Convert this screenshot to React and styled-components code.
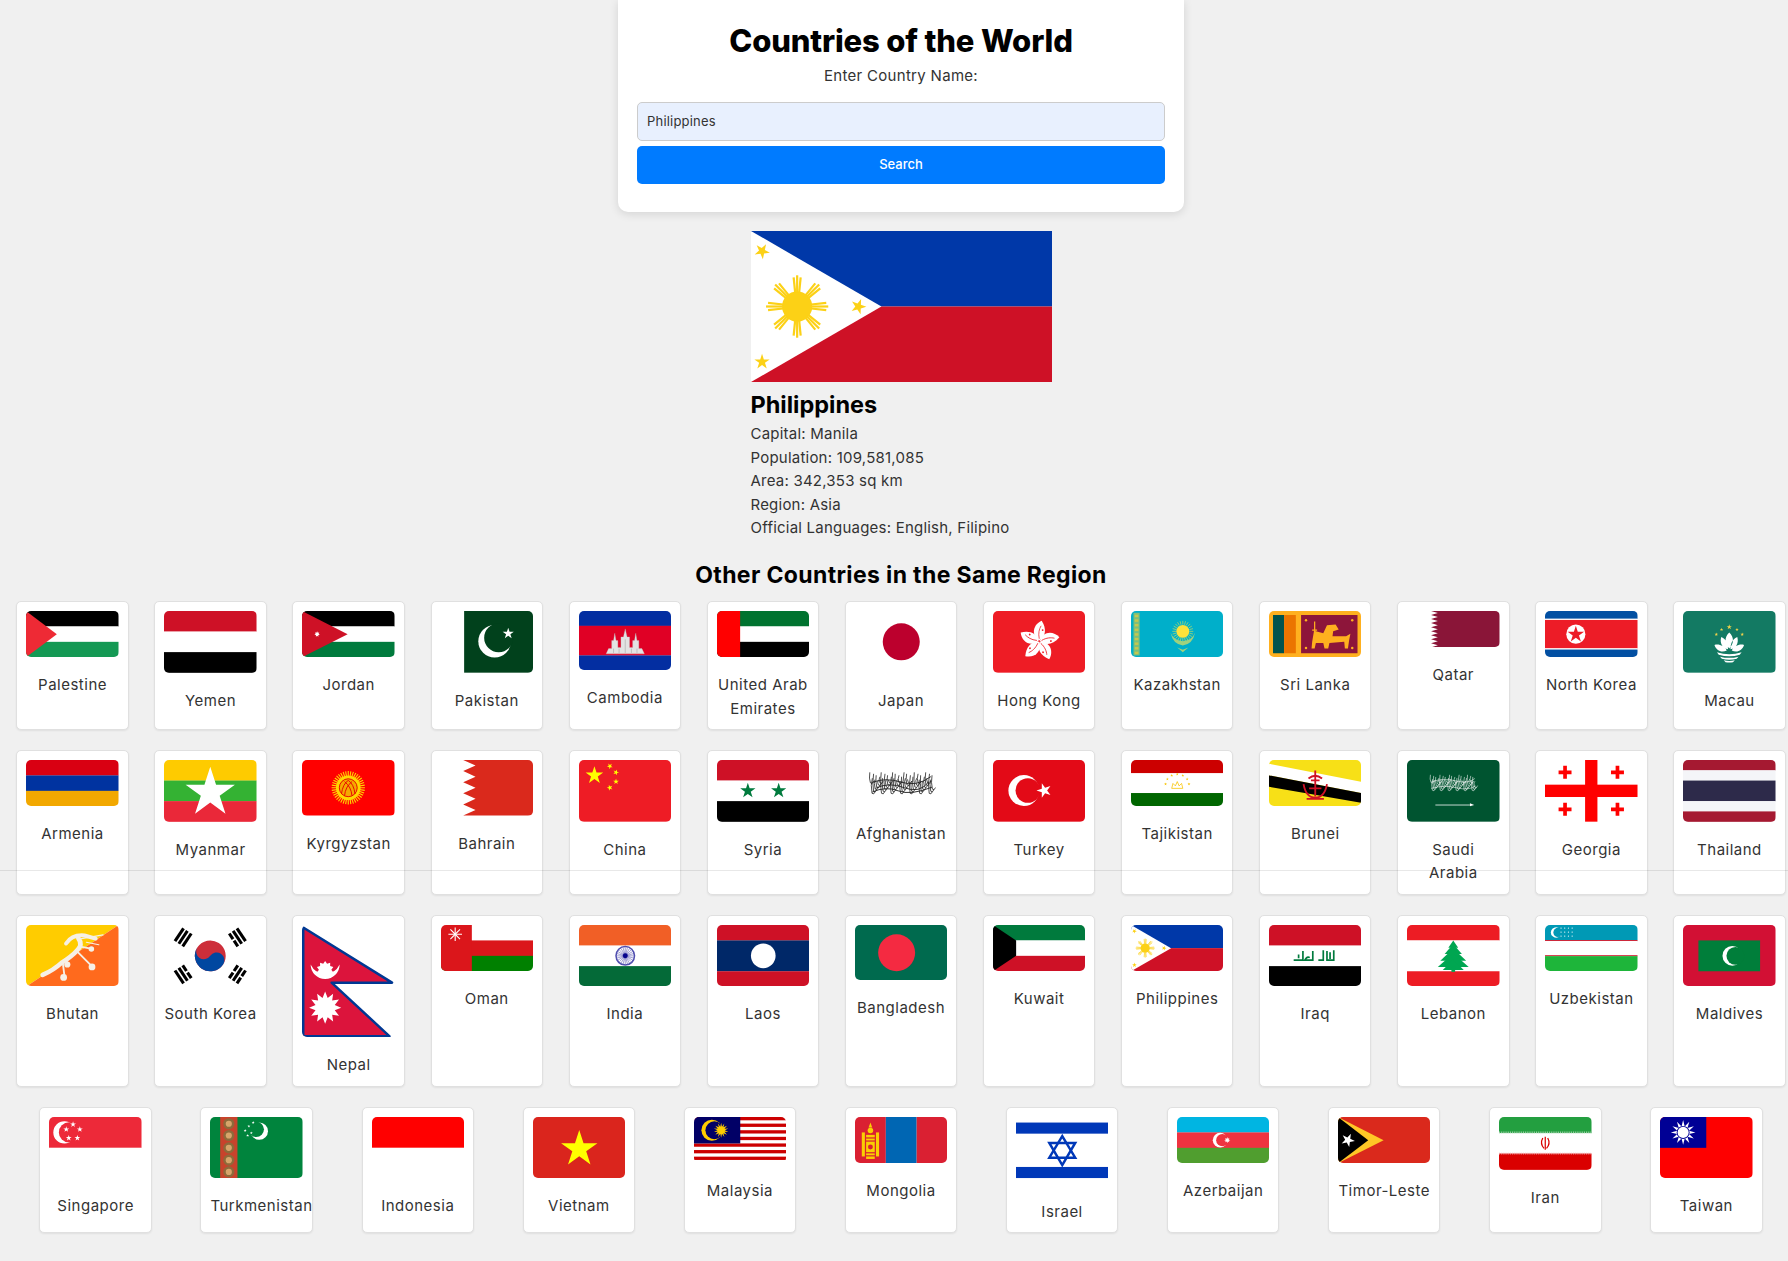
import React from "react";
import styled, { createGlobalStyle } from "styled-components";

const GlobalStyle = createGlobalStyle`
  html, body {
    margin: 0;
    background: #f0f0f0;
  }
  body {
    font-family: Inter, "Liberation Sans", sans-serif;
    color: #333;
  }
`;

const Page = styled.div`
  position: relative;
  box-sizing: border-box;
  width: 1788px;
  height: 1261px;
  overflow: hidden;
  padding-left: 14px;
  background: #f0f0f0;
`;

const Seam = styled.div`
  position: absolute;
  left: 0;
  right: 0;
  top: 870px;
  height: 1px;
  background: rgba(0, 0, 0, 0.09);
`;

const Main = styled.main`
  width: 1774px;
  display: flex;
  flex-direction: column;
  align-items: center;
`;

const SearchCard = styled.section`
  box-sizing: border-box;
  width: 566px;
  height: 212px;
  padding: 23px 19px 0;
  background: #fff;
  border-radius: 0 0 10px 10px;
  box-shadow: 0 2px 10px rgba(0, 0, 0, 0.12);
  text-align: center;
`;

const Title = styled.h1`
  margin: 0;
  font-size: 31px;
  line-height: 36px;
  font-weight: 800;
  color: #000;
  letter-spacing: -0.15px;
`;

const FieldLabel = styled.label`
  display: block;
  margin: 5px 0 15px;
  font-size: 15px;
  line-height: 23px;
  letter-spacing: 0.3px;
`;

const SearchInput = styled.input`
  display: block;
  box-sizing: border-box;
  width: 100%;
  height: 39px;
  padding: 0 9px 2px;
  border: 1px solid #ccc;
  border-radius: 5px;
  background: #e8f0fe;
  font: 400 13px Inter, "Liberation Sans", sans-serif;
  letter-spacing: 0.2px;
  color: #333;
  outline: none;
`;

const SearchButton = styled.button`
  display: block;
  width: 100%;
  height: 38px;
  padding: 0 0 2px;
  margin-top: 5px;
  border: 0;
  border-radius: 5px;
  background: #007bff;
  color: #fff;
  font: 500 13px Inter, "Liberation Sans", sans-serif;
`;

const Result = styled.section`
  width: 301px;
  margin-top: 19px;
`;

const ResultFlag = styled.svg`
  display: block;
  width: 301px;
  height: 151px;
`;

const ResultName = styled.h2`
  margin: 8px 0 2px;
  font-size: 23.5px;
  line-height: 30px;
  font-weight: 700;
  color: #000;
`;

const Fact = styled.div`
  font-size: 15px;
  line-height: 23.6px;
  letter-spacing: 0.22px;
`;

const SectionTitle = styled.h2`
  margin: 20px 0 11px;
  font-size: 23px;
  line-height: 30px;
  font-weight: 700;
  color: #000;
  letter-spacing: 0.36px;
`;

const Grid = styled.div`
  display: flex;
  flex-direction: column;
  gap: 20px;
  width: 100%;
`;

const Row = styled.div`
  display: flex;
  justify-content: center;
  gap: ${(p) => p.$gap}px;
`;

const Card = styled.article`
  box-sizing: border-box;
  flex: 0 0 112.4px;
  width: 112.4px;
  padding: 9px 8.95px;
  background: #fff;
  border: 1px solid #e0e0e0;
  border-radius: 5px;
  box-shadow: 0 1px 2px rgba(0, 0, 0, 0.07);
  text-align: center;
`;

const CardFlag = styled.svg`
  display: block;
  width: 100%;
  border-radius: 5px;
`;

const CardName = styled.div`
  margin-top: 16px;
  font-size: 15px;
  line-height: 23.4px;
  letter-spacing: 0.5px;
  white-space: ${(p) => (p.$nowrap ? "nowrap" : "normal")};
  text-align: ${(p) => (p.$nowrap ? "left" : "center")};
`;

// flag drawing helpers
const star = (cx, cy, r, n = 5, k = 0.382, rot = -90) => {
  const pts = [];
  for (let i = 0; i < n * 2; i++) {
    const a = ((rot + (i * 180) / n) * Math.PI) / 180;
    const rr = i % 2 ? r * k : r;
    pts.push(`${(cx + rr * Math.cos(a)).toFixed(2)},${(cy + rr * Math.sin(a)).toFixed(2)}`);
  }
  return pts.join(" ");
};

const Star = ({ x, y, r, fill, n, k, rot }) => <polygon points={star(x, y, r, n, k, rot)} fill={fill} />;

const Bands = ({ h, colors, weights }) => {
  const w = weights || colors.map(() => 1);
  const total = w.reduce((a, b) => a + b, 0);
  let y = 0;
  return colors.map((c, i) => {
    const bh = (h * w[i]) / total;
    const el = <rect key={i} x="0" y={y} width="300" height={bh + 0.5} fill={c} />;
    y += bh;
    return el;
  });
};

const Rays = ({ x, y, r1, r2, n, color, width }) =>
  Array.from({ length: n }).map((_, i) => {
    const a = (i * 2 * Math.PI) / n;
    return (
      <line
        key={i}
        x1={x + r1 * Math.cos(a)}
        y1={y + r1 * Math.sin(a)}
        x2={x + r2 * Math.cos(a)}
        y2={y + r2 * Math.sin(a)}
        stroke={color}
        strokeWidth={width}
      />
    );
  });

const Crescent = ({ x, y, r, dx, dy = 0, ir, color, bg }) => (
  <>
    <circle cx={x} cy={y} r={r} fill={color} />
    <circle cx={x + dx} cy={y + dy} r={ir} fill={bg} />
  </>
);

const PhilippinesArt = () => (
  <>
    <rect width="300" height="75" fill="#0038a8" />
    <rect y="75" width="300" height="75" fill="#ce1126" />
    <polygon points="0,0 130,75 0,150" fill="#fff" />
    <circle cx="46" cy="75" r="15" fill="#fcd116" />
    {[0, 45, 90, 135, 180, 225, 270, 315].map((a) => (
      <g key={a} transform={`rotate(${a} 46 75)`} stroke="#fcd116" strokeWidth="2.2">
        <line x1="60" y1="75" x2="77" y2="75" />
        <line x1="60" y1="73" x2="75" y2="71.5" />
        <line x1="60" y1="77" x2="75" y2="78.5" />
      </g>
    ))}
    <Star x={11} y={20} r={8} fill="#fcd116" rot={-60} />
    <Star x={107} y={75} r={8} fill="#fcd116" rot={-70} />
    <Star x={11} y={130} r={8} fill="#fcd116" />
  </>
);

// dense strokes standing in for the calligraphy on a few flags
const Scribble = ({ x, y, w, h, color, n = 20, sw = 2 }) => {
  const strokes = [];
  for (let i = 0; i < n; i++) {
    const px = x + (i * w) / n;
    const up = ((i * 11) % 7) * h * 0.07;
    const down = h * (0.5 + ((i * 5) % 6) * 0.1);
    strokes.push(
      <path
        key={i}
        d={`M${px + ((i * 3) % 4)} ${y + up} Q${px - 3} ${y + down * 0.6} ${px + 2} ${y + down} q6 6 ${w / n + 5} -5`}
        fill="none"
        stroke={color}
        strokeWidth={sw}
      />
    );
  }
  return strokes;
};

const FLAGS = {
  Palestine: [150, <>
    <Bands h={150} colors={["#000", "#fff", "#149954"]} />
    <polygon points="0,0 100,75 0,150" fill="#ee2a35" />
  </>],
  Yemen: [200, <Bands h={200} colors={["#ce1126", "#fff", "#000"]} />],
  Jordan: [150, <>
    <Bands h={150} colors={["#000", "#fff", "#007a3d"]} />
    <polygon points="0,0 148,75 0,150" fill="#ce1126" />
    <Star x={49} y={75} r={9} n={7} k={0.55} fill="#fff" />
  </>],
  Pakistan: [200, <>
    <rect width="300" height="200" fill="#fff" />
    <rect x="75" width="225" height="200" fill="#01411c" />
    <Crescent x={174} y={98} r={53} dx={13} dy={-11} ir={47} color="#fff" bg="#01411c" />
    <Star x={218} y={73} r={19} fill="#fff" />
  </>],
  Cambodia: [192, <>
    <Bands h={192} colors={["#032ea1", "#e00025", "#032ea1"]} weights={[1, 2, 1]} />
    <g fill="#e3e3e3" stroke="#bbb" strokeWidth="1">
      <polygon points="88,139 96,122 106,122 106,96 112,96 116,72 120,96 126,96 126,118 136,118 136,84 144,84 150,58 156,84 164,84 164,118 174,118 174,96 180,96 184,72 188,96 194,96 194,122 204,122 212,139" />
    </g>
    <g stroke="#a9a9a9" strokeWidth="2">
      <line x1="112" y1="122" x2="112" y2="136" />
      <line x1="130" y1="122" x2="130" y2="136" />
      <line x1="150" y1="92" x2="150" y2="136" />
      <line x1="170" y1="122" x2="170" y2="136" />
      <line x1="188" y1="122" x2="188" y2="136" />
    </g>
  </>],
  "United Arab Emirates": [150, <>
    <Bands h={150} colors={["#00732f", "#fff", "#000"]} />
    <rect width="75" height="150" fill="#ff0000" />
  </>],
  Japan: [200, <>
    <rect width="300" height="200" fill="#fff" />
    <circle cx="150" cy="100" r="60" fill="#bc002d" />
  </>],
  "Hong Kong": [200, <>
    <rect width="300" height="200" fill="#ee1c25" />
    {[0, 72, 144, 216, 288].map((a) => (
      <g key={a} transform={`rotate(${a} 150 98)`}>
        <path d="M150 96 C122 78 130 44 158 32 C174 58 172 82 150 96 Z" fill="#fff" />
        <path d="M150 90 C146 72 150 58 156 48" fill="none" stroke="#ee1c25" strokeWidth="2.5" />
        <circle cx="161" cy="62" r="3" fill="#ee1c25" />
      </g>
    ))}
  </>],
  Kazakhstan: [150, <>
    <rect width="300" height="150" fill="#00afca" />
    <rect x="8" y="6" width="20" height="138" fill="#7fbf7a" />
    {Array.from({ length: 9 }).map((_, i) => (
      <rect key={i} x="12" y={12 + i * 15} width="12" height="8" fill="#c6c84e" />
    ))}
    <Rays x={168} y={66} r1={22} r2={34} n={24} color="#d8e35a" width={2} />
    <circle cx="168" cy="66" r="21" fill="#fee23a" />
    <path d="M128 70 Q136 108 168 112 Q200 108 208 70 Q198 96 168 98 Q138 96 128 70Z" fill="#9fd27e" />
    <path d="M150 118 L168 126 L186 118 L168 134Z" fill="#9fd27e" />
  </>],
  "Sri Lanka": [150, <>
    <rect width="300" height="150" fill="#ffb01f" />
    <rect x="13" y="13" width="36" height="124" fill="#00534e" />
    <rect x="49" y="13" width="38" height="124" fill="#eb7400" />
    <rect x="104" y="13" width="183" height="124" fill="#8d153a" />
    <g fill="#ffb01f">
      <path d="M140 100 L146 64 L176 72 L188 46 L216 44 L226 60 L208 66 L206 82 L250 82 L264 74 L260 94 L256 122 L246 122 L244 100 L196 104 L192 122 L180 122 L176 104 L152 104 L148 122 L138 122Z" />
      <rect x="146" y="34" width="4" height="70" />
      <rect x="140" y="60" width="16" height="4" />
      <circle cx="120" cy="30" r="4" />
      <circle cx="270" cy="30" r="4" />
      <circle cx="120" cy="120" r="4" />
      <circle cx="270" cy="120" r="4" />
    </g>
  </>],
  Qatar: [118, <>
    <rect width="300" height="118" fill="#fff" />
    <polygon
      points={`300,0 78,0 ${Array.from({ length: 9 })
        .map((_, i) => `100,${(i + 0.5) * 13.1} 78,${(i + 1) * 13.1}`)
        .join(" ")} 300,118`}
      fill="#8a1538"
    />
  </>],
  "North Korea": [150, <>
    <Bands h={150} colors={["#024fa2", "#fff", "#ed1c27", "#fff", "#024fa2"]} weights={[25, 4, 92, 4, 25]} />
    <circle cx="100" cy="75" r="31" fill="#fff" />
    <Star x={100} y={76} r={28} fill="#ed1c27" />
  </>],
  Macau: [200, <>
    <rect width="300" height="200" fill="#137a63" />
    <Star x={150} y={52} r={9} fill="#f2d24a" />
    <Star x={125} y={60} r={6} fill="#f2d24a" />
    <Star x={175} y={60} r={6} fill="#f2d24a" />
    <Star x={108} y={76} r={6} fill="#f2d24a" />
    <Star x={192} y={76} r={6} fill="#f2d24a" />
    <path d="M150 70 C166 84 166 106 150 122 C134 106 134 84 150 70Z M124 84 C142 92 146 108 146 124 C128 120 118 104 124 84Z M176 84 C158 92 154 108 154 124 C172 120 182 104 176 84Z M102 110 C118 106 134 114 142 128 C124 136 108 128 102 110Z M198 110 C182 106 166 114 158 128 C176 136 192 128 198 110Z" fill="#fff" />
    <path d="M110 134 Q150 146 190 134 L184 142 Q150 152 116 142Z M120 148 Q150 156 180 148 L174 155 Q150 161 126 155Z M132 160 Q150 164 168 160 L162 166 Q150 168 138 166Z" fill="#fff" />
  </>],
  Armenia: [150, <Bands h={150} colors={["#d90012", "#0033a0", "#f2a800"]} />],
  Myanmar: [200, <>
    <Bands h={200} colors={["#fecb00", "#34b233", "#ea2839"]} />
    <Star x={150} y={106} r={84} fill="#fff" />
  </>],
  Kyrgyzstan: [180, <>
    <rect width="300" height="180" fill="#ff0000" />
    <Rays x={150} y={90} r1={30} r2={54} n={40} color="#ffd700" width={3.5} />
    <circle cx="150" cy="90" r="40" fill="#ffd700" />
    <circle cx="150" cy="90" r="30" fill="#f5a800" />
    <g fill="none" stroke="#e60000" strokeWidth="3">
      <circle cx="150" cy="90" r="29" />
      <path d="M128 110 Q132 78 150 66 Q168 78 172 110" />
      <path d="M138 116 Q140 88 162 70" />
      <path d="M162 116 Q160 88 138 70" />
    </g>
  </>],
  Bahrain: [180, <>
    <rect width="300" height="180" fill="#fff" />
    <polygon
      points={`300,0 72,0 ${Array.from({ length: 5 })
        .map((_, i) => `112,${(i + 0.5) * 36} 72,${(i + 1) * 36}`)
        .join(" ")} 300,180`}
      fill="#da291c"
    />
  </>],
  China: [200, <>
    <rect width="300" height="200" fill="#ee1c25" />
    <Star x={50} y={50} r={30} fill="#ffff00" />
    <Star x={100} y={20} r={10} fill="#ffff00" rot={-50} />
    <Star x={120} y={40} r={10} fill="#ffff00" rot={-70} />
    <Star x={120} y={70} r={10} fill="#ffff00" />
    <Star x={100} y={90} r={10} fill="#ffff00" rot={-110} />
  </>],
  Syria: [200, <>
    <Bands h={200} colors={["#ce1126", "#fff", "#000"]} />
    <Star x={100} y={100} r={26} fill="#007a3d" />
    <Star x={200} y={100} r={26} fill="#007a3d" />
  </>],
  Afghanistan: [150, <>
    <rect width="300" height="150" fill="#fff" />
    <Scribble x={48} y={40} w={206} h={68} color="#111" n={40} sw={2.4} />
    <path d="M56 104 Q100 84 140 100 T250 88 M66 92 Q110 70 160 90 T240 70 M58 72 Q100 56 150 72 T246 54" fill="none" stroke="#222" strokeWidth="3" />
  </>],
  Turkey: [200, <>
    <rect width="300" height="200" fill="#e30a17" />
    <Crescent x={100} y={99} r={50} dx={13} ir={40} color="#fff" bg="#e30a17" />
    <Star x={166} y={99} r={25} fill="#fff" rot={-180} />
  </>],
  Tajikistan: [150, <>
    <Bands h={150} colors={["#cc0000", "#fff", "#006600"]} weights={[2, 3, 2]} />
    <g fill="none" stroke="#f8c300" strokeWidth="2.5">
      <path d="M132 92 L136 76 L144 84 L150 70 L156 84 L164 76 L168 92Z" />
    </g>
    {[[112, 78], [118, 62], [132, 50], [150, 46], [168, 50], [182, 62], [188, 78]].map(([x, y]) => (
      <Star key={x} x={x} y={y} r={5} fill="#f8c300" />
    ))}
  </>],
  Brunei: [150, <>
    <rect width="300" height="150" fill="#f7e017" />
    <polygon points="0,12 0,50 300,107 300,71" fill="#fff" />
    <polygon points="0,50 0,87 300,139 300,107" fill="#000" />
    <g fill="none" stroke="#cf1126" strokeWidth="6">
      <path d="M112 78 Q120 122 150 122 Q180 122 188 78" />
      <path d="M150 34 L150 118" />
      <path d="M128 60 Q150 42 172 60" />
      <path d="M130 92 L170 92" />
      <path d="M122 126 L178 126" />
      <path d="M136 66 L164 66" />
    </g>
  </>],
  "Saudi Arabia": [200, <>
    <rect width="300" height="200" fill="#005430" />
    <Scribble x={76} y={48} w={146} h={50} color="#fff" n={34} sw={1.8} />
    <path d="M78 92 Q120 80 160 90 T222 84 M80 70 Q120 58 160 68 T220 60" fill="none" stroke="#fff" strokeWidth="1.8" />
    <path d="M92 146 L204 146" stroke="#fff" strokeWidth="2.5" />
    <path d="M204 140 L218 146 L204 150Z" fill="#fff" />
  </>],
  Georgia: [200, <>
    <rect width="300" height="200" fill="#fff" />
    <rect x="130" width="40" height="200" fill="#ff0000" />
    <rect y="80" width="300" height="40" fill="#ff0000" />
    {[[65, 40], [235, 40], [65, 160], [235, 160]].map(([x, y]) => (
      <path key={x * y} d={`M${x - 6} ${y - 21} h12 v15 h15 v12 h-15 v15 h-12 v-15 h-15 v-12 h15Z`} fill="#ff0000" />
    ))}
  </>],
  Thailand: [200, <Bands h={200} colors={["#a51931", "#f4f5f8", "#2d2a4a", "#f4f5f8", "#a51931"]} weights={[1, 1, 2, 1, 1]} />],
  Bhutan: [200, <>
    <polygon points="0,200 300,0 0,0" fill="#ffcc00" />
    <polygon points="0,200 300,0 300,200" fill="#ff6a1d" />
    <g fill="none" stroke="#f6f0e6" strokeLinecap="round">
      <path d="M54 162 Q90 146 116 122 Q150 100 164 84 Q186 64 170 44" strokeWidth="15" />
      <path d="M130 60 Q150 30 190 34 L226 44" strokeWidth="13" />
      <path d="M180 44 L250 32 M196 56 L236 64" strokeWidth="4" />
      <path d="M120 128 L124 160 M132 114 L134 128 M168 88 L210 130 M176 70 L206 76" strokeWidth="6" />
    </g>
    <circle cx="122" cy="170" r="11" fill="#f6f0e6" />
    <circle cx="134" cy="128" r="10" fill="#f6f0e6" />
    <circle cx="214" cy="136" r="11" fill="#f6f0e6" />
    <circle cx="212" cy="78" r="9" fill="#f6f0e6" />
  </>],
  "South Korea": [200, <>
    <rect width="300" height="200" fill="#fff" />
    <g transform="rotate(33.7 150 100)">
      <circle cx="150" cy="100" r="50" fill="#cd2e3a" />
      <path d="M100 100 A50 50 0 0 0 200 100 A25 25 0 0 0 150 100 A25 25 0 0 1 100 100Z" fill="#0047a0" />
    </g>
    {[[62, 40, -56.3, [1, 1, 1]], [238, 40, 56.3, [1, 1, 0]], [62, 160, 56.3, [0, 1, 1]], [238, 160, -56.3, [0, 1, 0]]].map(([x, y, a, bars]) => (
      <g key={x * y} transform={`rotate(${a} ${x} ${y})`} fill="#000">
        {bars.map((solid, i) => (solid ? (
          <rect key={i} x={x - 25} y={y - 20 + i * 15} width="50" height="10" />
        ) : (
          <g key={i}>
            <rect x={x - 25} y={y - 20 + i * 15} width="22" height="10" />
            <rect x={x + 3} y={y - 20 + i * 15} width="22" height="10" />
          </g>
        )))}
      </g>
    ))}
  </>],
  Nepal: [366, <>
    <rect width="300" height="366" fill="#fff" />
    <polygon points="4,8 292,187 96,187 284,361 4,361" fill="#dc143c" stroke="#003893" strokeWidth="8" strokeLinejoin="round" />
    <path d="M28 128 A47 47 0 0 0 122 128 A52 52 0 0 1 28 128Z" fill="#fff" />
    <Star x={75} y={145} r={28} n={10} k={0.72} fill="#fff" />
    <Star x={75} y={268} r={52} n={12} k={0.62} fill="#fff" />
  </>],
  Oman: [150, <>
    <Bands h={150} colors={["#fff", "#db161b", "#008000"]} />
    <rect width="100" height="150" fill="#db161b" />
    <Rays x={46} y={30} r1={0} r2={22} n={8} color="#fff" width={3.5} />
  </>],
  India: [200, <>
    <Bands h={200} colors={["#f15f26", "#fff", "#046a38"]} />
    <circle cx="150" cy="100" r="30" fill="none" stroke="#06038d" strokeOpacity="0.7" strokeWidth="5" />
    <Rays x={150} y={100} r1={4} r2={27} n={24} color="#06038d" width={1.2} />
    <circle cx="150" cy="100" r="8" fill="#06038d" />
  </>],
  Laos: [200, <>
    <Bands h={200} colors={["#ce1126", "#002868", "#ce1126"]} weights={[1, 2, 1]} />
    <circle cx="150" cy="100" r="40" fill="#fff" />
  </>],
  Bangladesh: [180, <>
    <rect width="300" height="180" fill="#006a4e" />
    <circle cx="135" cy="90" r="60" fill="#f42a41" />
  </>],
  Kuwait: [150, <>
    <Bands h={150} colors={["#007a3d", "#fff", "#ce1126"]} />
    <polygon points="0,0 75,50 75,100 0,150" fill="#000" />
  </>],
  Philippines: [150, <PhilippinesArt />],
  Iraq: [200, <>
    <Bands h={200} colors={["#ce1126", "#fff", "#000"]} />
    <g fill="none" stroke="#007a3d" strokeWidth="5.5">
      <path d="M210 82 V114 H188 V84 M198 88 V110 M176 82 V114 H160 M142 84 V114 H116 Q124 100 132 106 M110 84 V114 H80 M96 96 L96 108" />
    </g>
  </>],
  Lebanon: [200, <>
    <Bands h={200} colors={["#ed1c24", "#fff", "#ed1c24"]} weights={[1, 2, 1]} />
    <g fill="#00a651">
      <polygon points="150,50 166,74 134,74" />
      <polygon points="150,62 178,94 122,94" />
      <polygon points="150,76 192,116 108,116" />
      <polygon points="150,92 200,136 100,136" />
      <polygon points="150,112 184,146 116,146" />
      <rect x="144" y="136" width="12" height="16" />
    </g>
  </>],
  Uzbekistan: [150, <>
    <Bands h={150} colors={["#0099b5", "#ce1126", "#fff", "#ce1126", "#1eb53a"]} weights={[49, 3, 46, 3, 49]} />
    <Crescent x={36} y={24} r={17} dx={6} ir={15} color="#fff" bg="#0099b5" />
    {[0, 1, 2].map((row) =>
      [0, 1, 2, 3].map((col) => (
        <circle key={`${row}${col}`} cx={52 + col * 12} cy={10 + row * 13} r="2" fill="#fff" />
      ))
    )}
  </>],
  Maldives: [200, <>
    <rect width="300" height="200" fill="#d21034" />
    <rect x="50" y="50" width="200" height="100" fill="#007e3a" />
    <Crescent x={160} y={100} r={32} dx={10} ir={29} color="#fff" bg="#007e3a" />
  </>],
  Singapore: [200, <>
    <rect width="300" height="100" fill="#ed2939" />
    <rect y="100" width="300" height="100" fill="#fff" />
    <Crescent x={50} y={50} r={36} dx={15} ir={33} color="#fff" bg="#ed2939" />
    {[[78, 24], [100, 40], [92, 68], [64, 68], [56, 40]].map(([x, y]) => (
      <Star key={x} x={x} y={y} r={10} fill="#fff" />
    ))}
  </>],
  Turkmenistan: [200, <>
    <rect width="300" height="200" fill="#00843d" />
    <rect x="33" width="56" height="200" fill="#c8432c" />
    {[22, 60, 100, 140, 178].map((y) => (
      <g key={y}>
        <circle cx="61" cy={y} r="18" fill="#8e6a3a" />
        <circle cx="61" cy={y} r="10" fill="#d7a56a" />
      </g>
    ))}
    <Crescent x={160} y={46} r={28} dx={-10} dy={-6} ir={25} color="#fff" bg="#00843d" />
    {[[114, 44], [126, 30], [134, 52], [122, 60], [140, 18]].map(([x, y]) => (
      <Star key={x} x={x} y={y} r={5} fill="#fff" />
    ))}
  </>],
  Indonesia: [200, <>
    <rect width="300" height="100" fill="#ff0000" />
    <rect y="100" width="300" height="100" fill="#fff" />
  </>],
  Vietnam: [200, <>
    <rect width="300" height="200" fill="#da251d" />
    <Star x={150} y={104} r={62} fill="#ffff00" />
  </>],
  Malaysia: [150, <>
    <rect width="300" height="150" fill="#fff" />
    {Array.from({ length: 7 }).map((_, i) => (
      <rect key={i} y={i * 21.43} width="300" height="10.71" fill="#cc0001" />
    ))}
    <rect width="150" height="85.7" fill="#010066" />
    <Crescent x={58} y={43} r={34} dx={8} ir={29} color="#ffcc00" bg="#010066" />
    <Star x={88} y={43} r={24} n={14} k={0.5} fill="#ffcc00" />
  </>],
  Mongolia: [150, <>
    <rect width="100" height="150" fill="#da2032" />
    <rect x="100" width="100" height="150" fill="#0066b3" />
    <rect x="200" width="100" height="150" fill="#da2032" />
    <g fill="#f9cf02">
      <path d="M50 18 L56 34 L44 34Z" />
      <circle cx="50" cy="44" r="9" />
      <rect x="22" y="50" width="10" height="78" />
      <rect x="68" y="50" width="10" height="78" />
      <rect x="36" y="58" width="28" height="8" />
      <rect x="36" y="70" width="28" height="6" />
      <rect x="36" y="80" width="28" height="34" />
      <rect x="36" y="118" width="28" height="6" />
      <rect x="36" y="128" width="28" height="8" />
    </g>
    <circle cx="50" cy="97" r="8" fill="#da2032" />
  </>],
  Israel: [218, <>
    <rect width="300" height="218" fill="#fff" />
    <rect y="18" width="300" height="36" fill="#0038b8" />
    <rect y="162" width="300" height="36" fill="#0038b8" />
    <g fill="none" stroke="#0038b8" strokeWidth="8">
      <polygon points="150,62 192,132 108,132" />
      <polygon points="150,156 192,84 108,84" />
    </g>
  </>],
  Azerbaijan: [150, <>
    <Bands h={150} colors={["#00b5e2", "#ef3340", "#509e2f"]} />
    <Crescent x={140} y={75} r={24} dx={7} ir={20} color="#fff" bg="#ef3340" />
    <Star x={163} y={75} r={10} n={8} k={0.5} fill="#fff" />
  </>],
  "Timor-Leste": [150, <>
    <rect width="300" height="150" fill="#da291c" />
    <polygon points="0,0 148,75 0,150" fill="#ffc726" />
    <polygon points="0,0 98,75 0,150" fill="#000" />
    <Star x={32} y={75} r={23} fill="#fff" rot={-65} />
  </>],
  Iran: [171, <>
    <Bands h={171} colors={["#239f40", "#fff", "#da0000"]} weights={[1, 1.25, 1]} />
    <line x1="0" y1="50" x2="300" y2="50" stroke="#a8d6b0" strokeWidth="6" strokeDasharray="3 3" />
    <line x1="0" y1="119" x2="300" y2="119" stroke="#f0a8a8" strokeWidth="6" strokeDasharray="3 3" />
    <g fill="none" stroke="#da0000" strokeWidth="4">
      <path d="M150 64 V106" />
      <path d="M142 68 Q132 86 146 102" />
      <path d="M158 68 Q168 86 154 102" />
    </g>
  </>],
  Taiwan: [200, <>
    <rect width="300" height="200" fill="#fe0000" />
    <rect width="150" height="100" fill="#000095" />
    <Star x={75} y={50} r={40} n={12} k={0.5} fill="#fff" />
    <circle cx="75" cy="50" r="21" fill="#000095" />
    <circle cx="75" cy="50" r="18" fill="#fff" />
  </>],
};

const ROWS = [
  { gap: 25.7, names: ["Palestine", "Yemen", "Jordan", "Pakistan", "Cambodia", "United Arab Emirates", "Japan", "Hong Kong", "Kazakhstan", "Sri Lanka", "Qatar", "North Korea", "Macau"] },
  { gap: 25.7, names: ["Armenia", "Myanmar", "Kyrgyzstan", "Bahrain", "China", "Syria", "Afghanistan", "Turkey", "Tajikistan", "Brunei", "Saudi Arabia", "Georgia", "Thailand"] },
  { gap: 25.7, names: ["Bhutan", "South Korea", "Nepal", "Oman", "India", "Laos", "Bangladesh", "Kuwait", "Philippines", "Iraq", "Lebanon", "Uzbekistan", "Maldives"] },
  { gap: 48.7, names: ["Singapore", "Turkmenistan", "Indonesia", "Vietnam", "Malaysia", "Mongolia", "Israel", "Azerbaijan", "Timor-Leste", "Iran", "Taiwan"] },
];

function CountryCard({ name }) {
  const [h, art] = FLAGS[name];
  return (
    <Card>
      <CardFlag viewBox={`0 0 300 ${h}`}>{art}</CardFlag>
      <CardName $nowrap={name === "Turkmenistan"}>{name}</CardName>
    </Card>
  );
}

export default function App() {
  return (
    <Page>
      <GlobalStyle />
      <Main>
        <SearchCard>
          <Title>Countries of the World</Title>
          <FieldLabel htmlFor="country">Enter Country Name:</FieldLabel>
          <SearchInput id="country" defaultValue="Philippines" />
          <SearchButton type="button">Search</SearchButton>
        </SearchCard>
        <Result>
          <ResultFlag viewBox="0 0 300 150" preserveAspectRatio="none">
            <PhilippinesArt />
          </ResultFlag>
          <ResultName>Philippines</ResultName>
          <Fact>Capital: Manila</Fact>
          <Fact>Population: 109,581,085</Fact>
          <Fact>Area: 342,353 sq km</Fact>
          <Fact>Region: Asia</Fact>
          <Fact>Official Languages: English, Filipino</Fact>
        </Result>
        <SectionTitle>Other Countries in the Same Region</SectionTitle>
        <Grid>
          {ROWS.map((row) => (
            <Row key={row.names[0]} $gap={row.gap}>
              {row.names.map((name) => (
                <CountryCard key={name} name={name} />
              ))}
            </Row>
          ))}
        </Grid>
      </Main>
      <Seam />
    </Page>
  );
}
